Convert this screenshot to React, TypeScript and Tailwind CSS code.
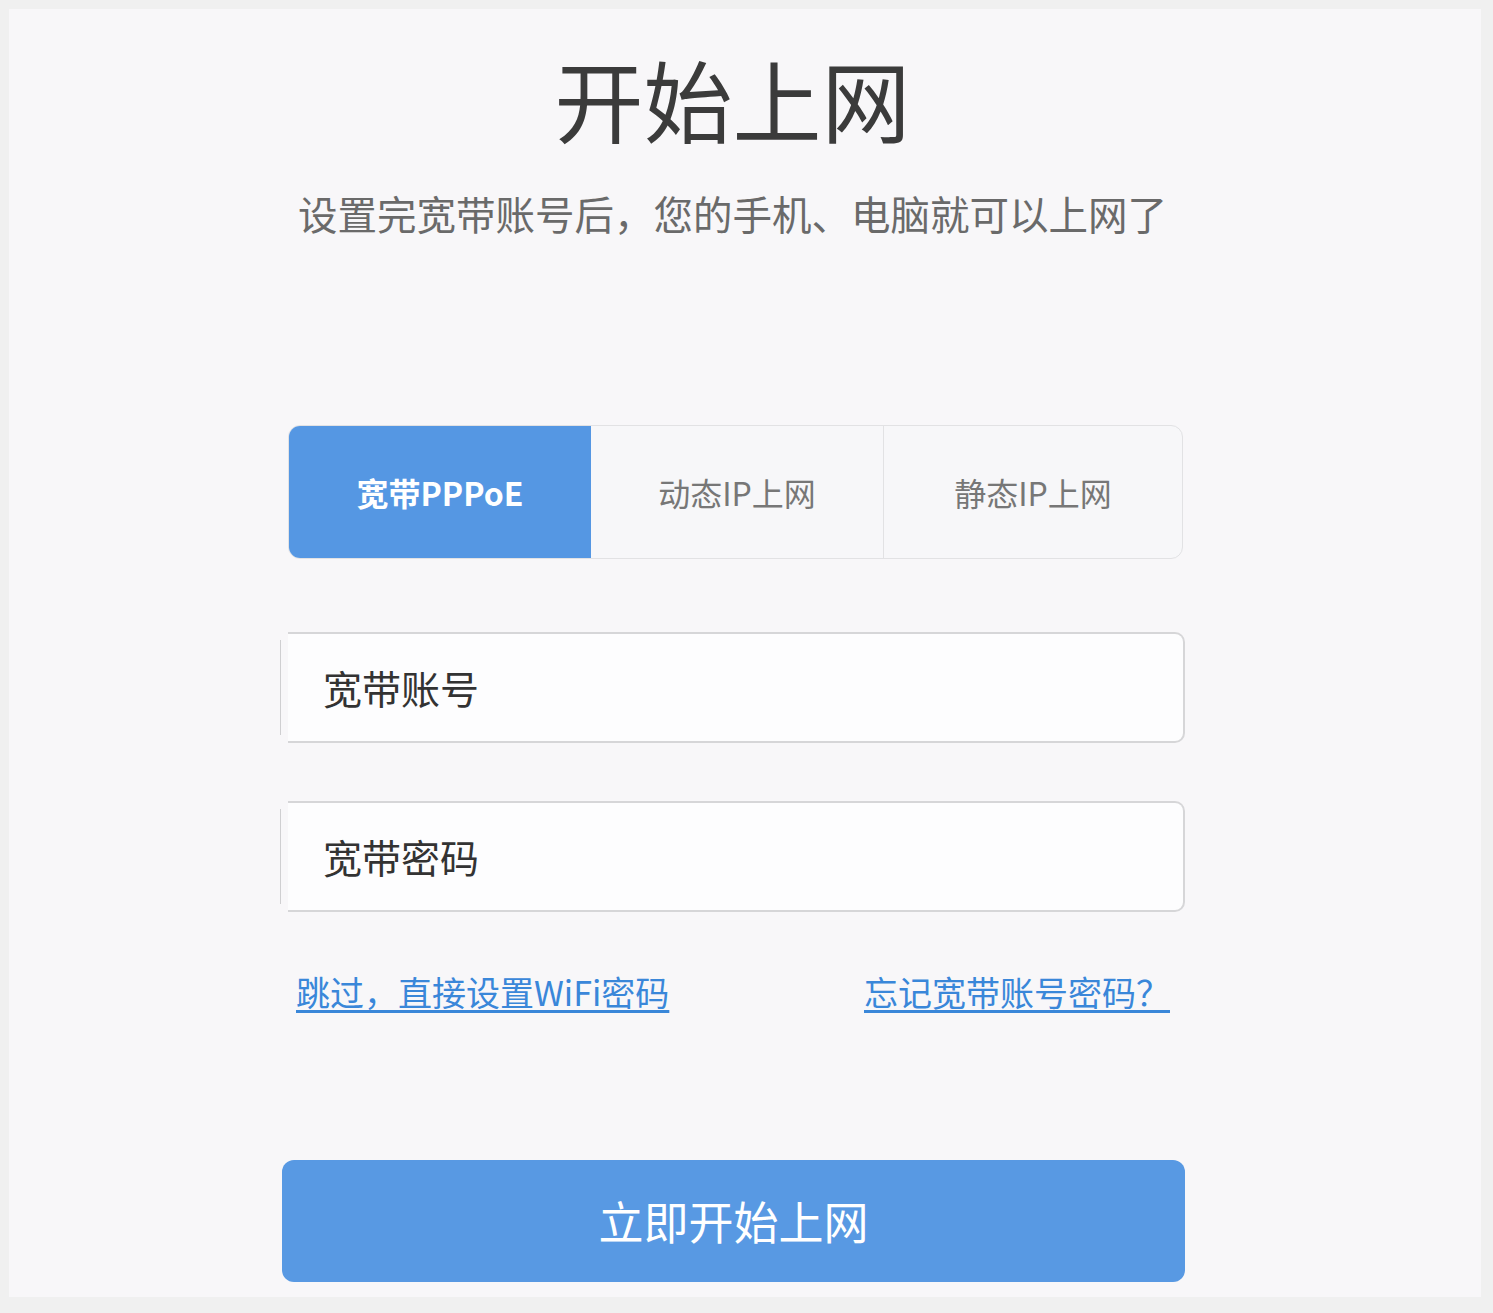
import React from "react";

const cjk = { fontFamily: '"Noto Sans CJK SC", "Noto Sans", sans-serif' };

export default function App() {
  return (
    <div className="min-h-[1313px] w-[1493px] bg-[#f0f0f0] pl-[9px] pt-[9px]" style={cjk}>
      <div className="h-[1288px] w-[1472px] bg-[#f8f7f9] pl-[271px] pt-[45px]">
        <div className="flex w-[905px] flex-col">
          <h1 className="text-center text-[89px] leading-[88px] font-normal text-[#3b3b3b]">开始上网</h1>
          <p className="mt-[51px] text-center text-[39.5px] leading-[40px] text-[#6a6a6a]">
            设置完宽带账号后，您的手机、电脑就可以上网了
          </p>

          <div className="ml-[8px] mt-[192px] flex h-[134px] w-[895px] overflow-hidden rounded-[12px] border border-[#e2e2e4] bg-[#f7f7f9]">
            <div className="flex w-[302px] items-center justify-center bg-[#5597e3] text-[32px] font-bold text-white">
              宽带PPPoE
            </div>
            <div className="flex w-[293px] items-center justify-center border-r border-[#e2e2e4] text-[32px] text-[#777]">
              动态IP上网
            </div>
            <div className="flex flex-1 items-center justify-center text-[32px] text-[#777]">
              静态IP上网
            </div>
          </div>

          <div className="mt-[73px] flex items-center gap-[7px]">
            <div className="h-[95px] w-px bg-[#cfcfd1]" />
            <div className="flex h-[111px] flex-1 items-center rounded-r-[10px] border-2 border-l-0 border-[#d6d6d8] bg-[#fdfdfe] pl-[35px] text-[39px] text-[#333]">
              宽带账号
            </div>
          </div>

          <div className="mt-[58px] flex items-center gap-[7px]">
            <div className="h-[95px] w-px bg-[#cfcfd1]" />
            <div className="flex h-[111px] flex-1 items-center rounded-r-[10px] border-2 border-l-0 border-[#d6d6d8] bg-[#fdfdfe] pl-[35px] text-[39px] text-[#333]">
              宽带密码
            </div>
          </div>

          <div className="mt-[60px] flex items-center justify-between pl-[16px] pr-[15px] text-[34px] leading-[40px] text-[#3a87d9]">
            <a className="underline underline-offset-[4px]">跳过，直接设置WiFi密码</a>
            <a className="underline underline-offset-[4px]">忘记宽带账号密码？</a>
          </div>

          <button className="ml-[2px] mt-[148px] flex h-[122px] w-[903px] items-center justify-center rounded-[12px] bg-[#5899e3] text-[45px] text-white">
            立即开始上网
          </button>
        </div>
      </div>
    </div>
  );
}
